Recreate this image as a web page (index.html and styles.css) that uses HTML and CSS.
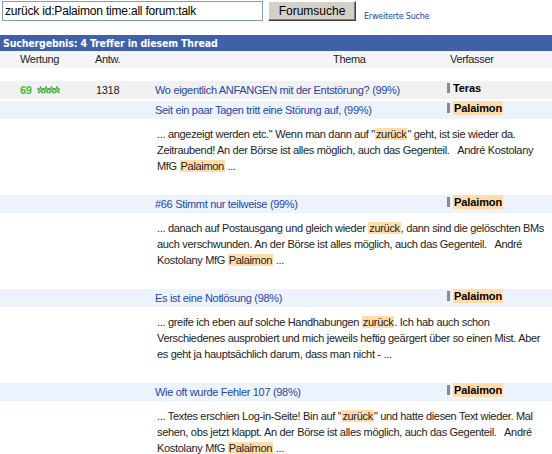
FILE: index.html
```html
<!DOCTYPE html>
<html lang="de">
<head>
<meta charset="utf-8">
<title>Forumsuche</title>
<link rel="stylesheet" href="styles.css">
</head>
<body>
<form class="search">
  <input class="query" type="text" value="zurück id:Palaimon time:all forum:talk">
  <button class="btn" type="button">Forumsuche</button>
  <a class="adv" href="#">Erweiterte Suche</a>
</form>

<div class="bar">Suchergebnis: 4 Treffer in diesem Thread</div>

<div class="cols">
  <span class="c-rate">Wertung</span>
  <span class="c-ans">Antw.</span>
  <span class="c-topic">Thema</span>
  <span class="c-author">Verfasser</span>
</div>

<div class="thread">
  <span class="rate"><b>69</b>
    <svg class="stars" width="23" height="8" viewBox="-0.5 0 23 8">
      <g fill="#7ad87a" stroke="#2a942a" stroke-width="0.7">
        <polygon points="3,0.3 3.9,2.8 6.5,2.9 4.4,4.5 5.2,7.2 3,5.6 0.8,7.2 1.6,4.5 -0.5,2.9 2.1,2.8"/>
        <polygon points="8.5,0.3 9.4,2.8 12,2.9 9.9,4.5 10.7,7.2 8.5,5.6 6.3,7.2 7.1,4.5 5,2.9 7.6,2.8"/>
        <polygon points="14,0.3 14.9,2.8 17.5,2.9 15.4,4.5 16.2,7.2 14,5.6 11.8,7.2 12.6,4.5 10.5,2.9 13.1,2.8"/>
        <polygon points="19.5,0.3 20.4,2.8 23,2.9 20.9,4.5 21.7,7.2 19.5,5.6 17.3,7.2 18.1,4.5 16,2.9 18.6,2.8"/>
      </g>
    </svg>
  </span>
  <span class="ans">1318</span>
  <a class="topic" href="#">Wo eigentlich ANFANGEN mit der Entstörung? (99%)</a>
  <span class="author"><i class="tick"></i>Teras</span>
</div>

<div class="result">
  <div class="head">
    <a class="topic" href="#">Seit ein paar Tagen tritt eine Störung auf, (99%)</a>
    <span class="author"><i class="tick"></i><mark>Palaimon</mark></span>
  </div>
  <p class="snippet">... angezeigt werden etc." Wenn man dann auf "<mark>zurück</mark>" geht, ist sie wieder da.<br>Zeitraubend! An der Börse ist alles möglich, auch das Gegenteil. &nbsp; André Kostolany<br>MfG <mark>Palaimon</mark> ...</p>
</div>

<div class="result">
  <div class="head">
    <a class="topic" href="#">#66 Stimmt nur teilweise (99%)</a>
    <span class="author"><i class="tick"></i><mark>Palaimon</mark></span>
  </div>
  <p class="snippet">... danach auf Postausgang und gleich wieder <mark>zurück</mark>, dann sind die gelöschten BMs<br>auch verschwunden. An der Börse ist alles möglich, auch das Gegenteil. &nbsp; André<br>Kostolany MfG <mark>Palaimon</mark> ...</p>
</div>

<div class="result">
  <div class="head">
    <a class="topic" href="#">Es ist eine Notlösung (98%)</a>
    <span class="author"><i class="tick"></i><mark>Palaimon</mark></span>
  </div>
  <p class="snippet">... greife ich eben auf solche Handhabungen <mark>zurück</mark>. Ich hab auch schon<br>Verschiedenes ausprobiert und mich jeweils heftig geärgert über so einen Mist. Aber<br>es geht ja hauptsächlich darum, dass man nicht - ...</p>
</div>

<div class="result">
  <div class="head">
    <a class="topic" href="#">Wie oft wurde Fehler 107 (98%)</a>
    <span class="author"><i class="tick"></i><mark>Palaimon</mark></span>
  </div>
  <p class="snippet">... Textes erschien Log-in-Seite! Bin auf "<mark>zurück</mark>" und hatte diesen Text wieder. Mal<br>sehen, obs jetzt klappt. An der Börse ist alles möglich, auch das Gegenteil. &nbsp; André<br>Kostolany MfG <mark>Palaimon</mark> ...</p>
</div>
</body>
</html>
```

FILE: styles.css
```css
html, body {
  margin: 0;
  padding: 0;
  background: #ffffff;
}
body {
  font-family: "Liberation Sans", Arial, sans-serif;
  font-size: 11px;
  letter-spacing: -0.32px;
  color: #000;
  width: 552px;
  overflow: hidden;
}
.search {
  display: flex;
  align-items: flex-start;
  margin: 0;
  padding: 1px 0 0 2px;
  height: 34px;
}
.query {
  box-sizing: border-box;
  width: 261px;
  height: 20px;
  margin: 0;
  padding: 1px 2px;
  border: 1px solid #7f9db9;
  font-family: "Liberation Sans", Arial, sans-serif;
  font-size: 12px;
  letter-spacing: -0.2px;
  color: #000;
}
.btn {
  box-sizing: border-box;
  margin: 0 0 0 5px;
  width: 88px;
  height: 20px;
  padding: 0;
  background: #d4d0c8;
  border: 1px solid;
  border-color: #fff #404040 #404040 #fff;
  box-shadow: inset -1px -1px 0 #808080;
  font-family: "Liberation Sans", Arial, sans-serif;
  font-size: 12px;
  letter-spacing: 0;
  color: #000;
}
.adv {
  margin: 11px 0 0 8px;
  font-family: "DejaVu Sans", Verdana, sans-serif;
  font-size: 8px;
  letter-spacing: -0.2px;
  color: #2244aa;
  text-decoration: none;
}
.bar {
  height: 16px;
  line-height: 16px;
  background: #4061a9;
  color: #fff;
  font-weight: bold;
  font-size: 10.5px;
  letter-spacing: -0.15px;
  padding-left: 3px;
  font-family: "DejaVu Sans Condensed", "DejaVu Sans", sans-serif;
}
.cols {
  display: grid;
  grid-template-columns: 85px 65px 290px 1fr;
  height: 17px;
  line-height: 16px;
  background: #f3f5f9;
  color: #222;
  margin-bottom: 13px;
}
.c-rate { padding-left: 20px; }
.c-ans { padding-left: 10px; }
.c-topic { padding-left: 183px; }
.c-author { padding-left: 10px; }

.thread {
  display: grid;
  grid-template-columns: 85px 65px 290px 1fr;
  align-items: center;
  height: 18px;
  background: #f1f1f1;
  margin-bottom: 2px;
}
.rate {
  display: flex;
  align-items: center;
  padding-left: 20px;
}
.rate b {
  font-weight: bold;
  color: #44bb44;
  margin-right: 5px;
}
.stars { display: block; }
.ans { padding-left: 11px; color: #222; }
.topic {
  color: #2646a6;
  text-decoration: none;
  padding-left: 5px;
}
.author {
  display: flex;
  align-items: center;
  padding-left: 7px;
  font-weight: bold;
  color: #000;
  align-self: start;
  padding-top: 1px;
  letter-spacing: -0.1px;
}
.tick {
  display: inline-block;
  width: 3px;
  height: 10px;
  background: #8a8a8a;
  margin-right: 3px;
}
mark {
  background: #ffdcaa;
  color: inherit;
  padding: 0 1px;
}

.result {
  margin-bottom: 21px;
}
.head {
  display: grid;
  grid-template-columns: 150px 290px 1fr;
  height: 18px;
  line-height: 18px;
  background: #edf3fc;
}
.head .topic { grid-column: 2; }
.head .author { grid-column: 3; padding-top: 0; line-height: 14px; }
.snippet {
  margin: 7px 0 0 157px;
  line-height: 16px;
  color: #222;
  white-space: nowrap;
}
```
